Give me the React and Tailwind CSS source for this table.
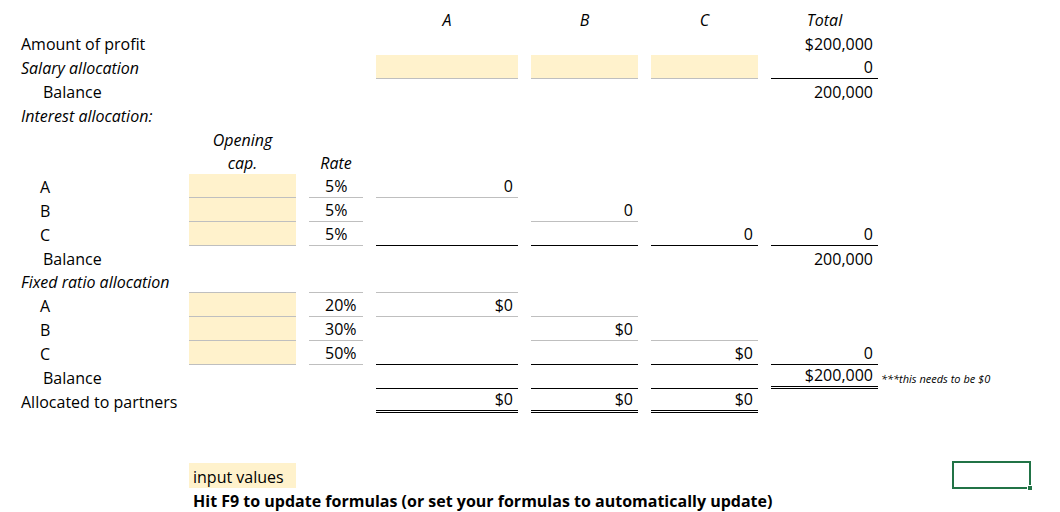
import React from 'react';

const grid =
  'grid grid-cols-[189px_107px_13px_54px_13px_142px_13px_107px_13px_107px_13px_107px_1fr]';

const lines = {
  g: 'border-b border-[#bfbfbf]',
  k: 'border-b border-black',
  d: 'border-b-[3px] border-double border-black',
};

// one spreadsheet cell, text sits at the bottom like Excel does
const Cell = ({ cell }) => {
  if (!cell) return <div />;
  const c = typeof cell === 'string' ? { v: cell } : cell;
  const align =
    c.align === 'center' ? 'justify-center' : c.align === 'left' ? 'justify-start pl-[16px]' : 'justify-end pr-[5px]';
  return (
    <div
      className={`flex items-end pb-[1px] whitespace-nowrap ${align} ${c.fill ? 'bg-[#fff2cc]' : ''} ${
        c.b ? lines[c.b] : ''
      } ${c.i ? 'italic' : ''}`}
    >
      {c.v}
    </div>
  );
};

const Row = ({ h = 'h-[24px]', label, indent, italic, op, rate, a, b, c, total, note }) => (
  <div className={`${grid} ${h}`}>
    <div
      className={`flex items-end pb-[1px] whitespace-nowrap ${
        indent === 'x' ? 'pl-[40px]' : indent ? 'pl-[43px]' : 'pl-[21px]'
      } ${italic ? 'italic' : ''}`}
    >
      {label}
    </div>
    <Cell cell={op} />
    <div />
    <Cell cell={rate} />
    <div />
    <Cell cell={a} />
    <div />
    <Cell cell={b} />
    <div />
    <Cell cell={c} />
    <div />
    <Cell cell={total} />
    <div className="flex items-end pb-[4px] pl-[3px] text-[11px] leading-[12px] italic whitespace-nowrap">{note}</div>
  </div>
);

const fillG = { fill: true, b: 'g' };

export default function App() {
  return (
    <div className="relative w-[1060px] h-[512px] overflow-hidden bg-white pt-[7px] text-[16px] leading-[20px] text-black font-['Open_Sans','Noto_Sans',sans-serif]">
      <Row
        a={{ v: 'A', align: 'center', i: true }}
        b={{ v: 'B', align: 'center', i: true }}
        c={{ v: 'C', align: 'center', i: true }}
        total={{ v: 'Total', align: 'center', i: true }}
      />
      <Row label="Amount of profit" total="$200,000" />
      <Row label="Salary allocation" italic a={fillG} b={fillG} c={fillG} total={{ v: '0', b: 'k' }} />
      <Row label="Balance" indent total="200,000" />
      <Row label="Interest allocation:" italic />
      <Row op={{ v: 'Opening', align: 'center', i: true }} />
      <Row
        h="h-[23px]"
        op={{ v: 'cap.', align: 'center', i: true }}
        rate={{ v: 'Rate', align: 'center', i: true }}
      />
      <Row label="A" indent="x" op={fillG} rate={{ v: '5%', align: 'left', b: 'g' }} a={{ v: '0', b: 'g' }} />
      <Row label="B" indent="x" op={fillG} rate={{ v: '5%', align: 'left', b: 'g' }} b={{ v: '0', b: 'g' }} />
      <Row
        label="C"
        indent="x"
        op={fillG}
        rate={{ v: '5%', align: 'left', b: 'g' }}
        a={{ b: 'k' }}
        b={{ b: 'k' }}
        c={{ v: '0', b: 'k' }}
        total={{ v: '0', b: 'k' }}
      />
      <Row label="Balance" indent total="200,000" />
      <Row h="h-[23px]" label="Fixed ratio allocation" italic op={{ b: 'g' }} rate={{ b: 'g' }} a={{ b: 'g' }} />
      <Row
        label="A"
        indent="x"
        op={fillG}
        rate={{ v: '20%', align: 'left', b: 'g' }}
        a={{ v: '$0', b: 'g' }}
        b={{ b: 'g' }}
      />
      <Row
        label="B"
        indent="x"
        op={fillG}
        rate={{ v: '30%', align: 'left', b: 'g' }}
        b={{ v: '$0', b: 'g' }}
        c={{ b: 'g' }}
      />
      <Row
        label="C"
        indent="x"
        op={fillG}
        rate={{ v: '50%', align: 'left', b: 'g' }}
        a={{ b: 'k' }}
        b={{ b: 'k' }}
        c={{ v: '$0', b: 'k' }}
        total={{ v: '0', b: 'k' }}
      />
      <Row
        label="Balance"
        indent
        a={{ b: 'k' }}
        b={{ b: 'k' }}
        c={{ b: 'k' }}
        total={{ v: '$200,000', b: 'd' }}
        note="***this needs to be $0"
      />
      <Row label="Allocated to partners" a={{ v: '$0', b: 'd' }} b={{ v: '$0', b: 'd' }} c={{ v: '$0', b: 'd' }} />
      <Row h="h-[25px]" />
      <Row h="h-[25px]" />
      <div className={`${grid} h-[25px]`}>
        <div />
        <div className="flex items-end pb-[1px] pl-[4px] bg-[#fff2cc] whitespace-nowrap">input values</div>
      </div>
      <div className={`${grid} h-[24px]`}>
        <div />
        <div className="flex items-end pb-[1px] pl-[4px] font-bold whitespace-nowrap">
          Hit F9 to update formulas (or set your formulas to automatically update)
        </div>
      </div>
      {/* active cell selection */}
      <div className="absolute left-[952px] top-[461px] w-[79px] h-[28px] border-2 border-[#217346]" />
      <div className="absolute left-[1027px] top-[485px] w-[6px] h-[6px] bg-[#217346] border border-white" />
    </div>
  );
}
